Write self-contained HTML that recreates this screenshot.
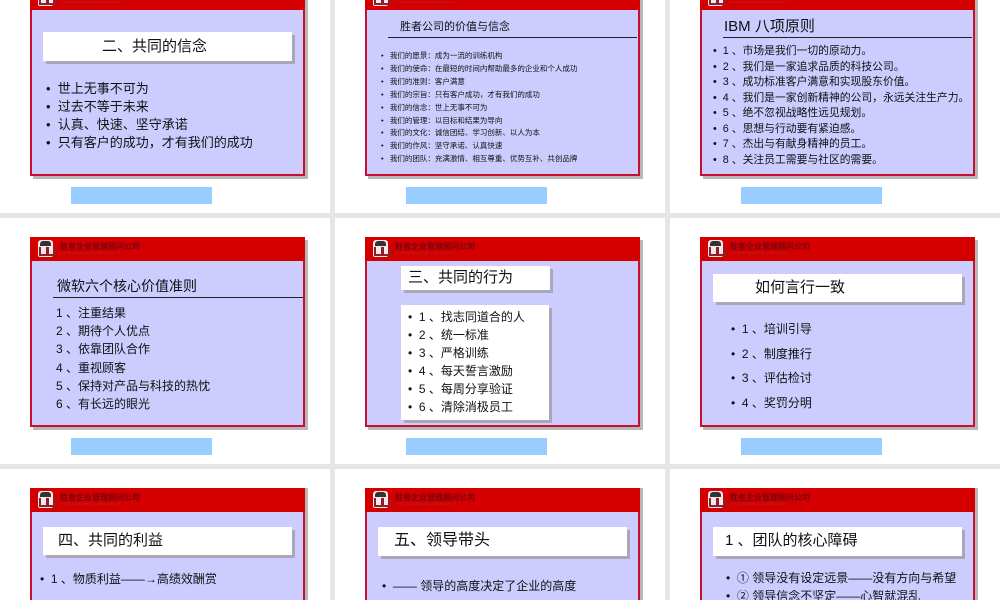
<!DOCTYPE html>
<html style="width:1000px;height:600px;overflow:hidden"><head><meta charset="utf-8"><style>
*{margin:0;padding:0;box-sizing:border-box}
body{width:1000px;height:600px;overflow:hidden;background:#e6e6e6;font-family:"Liberation Sans","Noto Sans CJK SC",sans-serif;color:#111}
#w{position:relative;width:1000px;height:600px;overflow:hidden}
.cell{position:absolute;background:#fff;width:330px}
.slide{position:absolute;width:275px;height:190px;background:#ccccff;border:2px solid #c8102e;box-shadow:3px 3px 0 #b8b8b8}
.slide.b{height:112px;border-bottom:none;box-shadow:3px 0 0 #b8b8b8}
.hdr{position:absolute;left:-2px;top:-2px;width:275px;height:24px;background:#d40000}
.logo{position:absolute;left:8px;top:3px;width:15px;height:17px;background:#f4e8e8;border-radius:3px 3px 2px 2px}
.logo:before{content:"";position:absolute;left:2px;top:1px;width:11px;height:5px;background:#333;border-radius:3px 3px 0 0}
.logo:after{content:"";position:absolute;left:1px;top:7px;width:13px;height:7px;border-left:2px solid #8a2030;border-right:2px solid #8a2030;border-bottom:2px solid #8a2030;background:linear-gradient(90deg,transparent 40%,#8a2030 40%,#8a2030 60%,transparent 60%)}
.co{position:absolute;left:30px;top:6px;font-size:8px;font-weight:bold;color:#7a0010;white-space:nowrap;line-height:1}
.co2{position:absolute;left:30px;top:15px;font-size:3px;color:#a03030;white-space:nowrap;line-height:1}
.bar{position:absolute;width:141px;height:17px;background:#99ccff}
.t{position:absolute;white-space:nowrap;line-height:1}
.box{position:absolute;background:#fff;box-shadow:3px 3px 0 #a8a8b8}
.ln{position:absolute;height:1px;background:#222}
</style></head><body><div id="w">

<div class="cell" style="left:0;top:0;height:213px"></div>
<div class="cell" style="left:335px;top:0;height:213px"></div>
<div class="cell" style="left:670px;top:0;height:213px"></div>
<div class="cell" style="left:0;top:218px;height:246px"></div>
<div class="cell" style="left:335px;top:218px;height:246px"></div>
<div class="cell" style="left:670px;top:218px;height:246px"></div>
<div class="cell" style="left:0;top:469px;height:131px"></div>
<div class="cell" style="left:335px;top:469px;height:131px"></div>
<div class="cell" style="left:670px;top:469px;height:131px"></div>

<div class="bar" style="left:71px;top:187px"></div>
<div class="bar" style="left:406px;top:187px"></div>
<div class="bar" style="left:741px;top:187px"></div>
<div class="bar" style="left:71px;top:438px"></div>
<div class="bar" style="left:406px;top:438px"></div>
<div class="bar" style="left:741px;top:438px"></div>

<div class="slide" style="left:30px;top:-14px"><div class="hdr"><div class="logo"></div><div class="co">胜者企业管理顾问公司</div><div class="co2">VICTOR CORPORATION CONSULTANT CO</div></div></div>
<div class="slide" style="left:365px;top:-14px"><div class="hdr"><div class="logo"></div><div class="co">胜者企业管理顾问公司</div><div class="co2">VICTOR CORPORATION CONSULTANT CO</div></div></div>
<div class="slide" style="left:700px;top:-14px"><div class="hdr"><div class="logo"></div><div class="co">胜者企业管理顾问公司</div><div class="co2">VICTOR CORPORATION CONSULTANT CO</div></div></div>
<div class="slide" style="left:30px;top:237px"><div class="hdr"><div class="logo"></div><div class="co">胜者企业管理顾问公司</div><div class="co2">VICTOR CORPORATION CONSULTANT CO</div></div></div>
<div class="slide" style="left:365px;top:237px"><div class="hdr"><div class="logo"></div><div class="co">胜者企业管理顾问公司</div><div class="co2">VICTOR CORPORATION CONSULTANT CO</div></div></div>
<div class="slide" style="left:700px;top:237px"><div class="hdr"><div class="logo"></div><div class="co">胜者企业管理顾问公司</div><div class="co2">VICTOR CORPORATION CONSULTANT CO</div></div></div>
<div class="slide b" style="left:30px;top:488px"><div class="hdr"><div class="logo"></div><div class="co">胜者企业管理顾问公司</div><div class="co2">VICTOR CORPORATION CONSULTANT CO</div></div></div>
<div class="slide b" style="left:365px;top:488px"><div class="hdr"><div class="logo"></div><div class="co">胜者企业管理顾问公司</div><div class="co2">VICTOR CORPORATION CONSULTANT CO</div></div></div>
<div class="slide b" style="left:700px;top:488px"><div class="hdr"><div class="logo"></div><div class="co">胜者企业管理顾问公司</div><div class="co2">VICTOR CORPORATION CONSULTANT CO</div></div></div>

<div class="box" style="left:43px;top:32px;width:249px;height:29px"></div>
<div class="t" style="left:102px;top:39px;font-size:15px">二、共同的信念</div>
<div style="position:absolute;left:46px;top:80px;font-size:13px;line-height:18px">
<div>•&nbsp; 世上无事不可为</div><div>•&nbsp; 过去不等于未来</div><div>•&nbsp; 认真、快速、坚守承诺</div><div>•&nbsp; 只有客户的成功，才有我们的成功</div></div>

<div class="t" style="left:400px;top:22px;font-size:11px">胜者公司的价值与信念</div>
<div class="ln" style="left:388px;top:37px;width:249px"></div>
<div style="position:absolute;left:381px;top:50px;font-size:7.5px;line-height:12.9px;white-space:nowrap">
<div>•&nbsp;&nbsp; 我们的愿景：成为一流的训练机构</div>
<div>•&nbsp;&nbsp; 我们的使命：在最短的时间内帮助最多的企业和个人成功</div>
<div>•&nbsp;&nbsp; 我们的准则：客户满意</div>
<div>•&nbsp;&nbsp; 我们的宗旨：只有客户成功，才有我们的成功</div>
<div>•&nbsp;&nbsp; 我们的信念：世上无事不可为</div>
<div>•&nbsp;&nbsp; 我们的管理：以目标和结果为导向</div>
<div>•&nbsp;&nbsp; 我们的文化：诚信团结、学习创新、以人为本</div>
<div>•&nbsp;&nbsp; 我们的作风：坚守承诺、认真快速</div>
<div>•&nbsp;&nbsp; 我们的团队：充满激情、相互尊重、优势互补、共创品牌</div></div>

<div class="t" style="left:724px;top:19px;font-size:15px">IBM 八项原则</div>
<div class="ln" style="left:723px;top:37px;width:249px"></div>
<div style="position:absolute;left:713px;top:44px;font-size:10.8px;line-height:15.5px;white-space:nowrap">
<div>•&nbsp; 1 、市场是我们一切的原动力。</div>
<div>•&nbsp; 2 、我们是一家追求品质的科技公司。</div>
<div>•&nbsp; 3 、成功标准客户满意和实现股东价值。</div>
<div>•&nbsp; 4 、我们是一家创新精神的公司，永远关注生产力。</div>
<div>•&nbsp; 5 、绝不忽视战略性远见规划。</div>
<div>•&nbsp; 6 、思想与行动要有紧迫感。</div>
<div>•&nbsp; 7 、杰出与有献身精神的员工。</div>
<div>•&nbsp; 8 、关注员工需要与社区的需要。</div></div>

<div class="t" style="left:57px;top:279px;font-size:14px">微软六个核心价值准则</div>
<div class="ln" style="left:53px;top:297px;width:250px"></div>
<div style="position:absolute;left:56px;top:304px;font-size:12px;line-height:18.2px;white-space:nowrap">
<div>1 、注重结果</div><div>2 、期待个人优点</div><div>3 、依靠团队合作</div><div>4 、重视顾客</div><div>5 、保持对产品与科技的热忱</div><div>6 、有长远的眼光</div></div>

<div class="box" style="left:401px;top:266px;width:149px;height:24px"></div>
<div class="t" style="left:408px;top:270px;font-size:15px">三、共同的行为</div>
<div class="box" style="left:401px;top:305px;width:148px;height:115px"></div>
<div style="position:absolute;left:408px;top:308px;font-size:12px;line-height:18px;white-space:nowrap">
<div>•&nbsp; 1 、找志同道合的人</div><div>•&nbsp; 2 、统一标准</div><div>•&nbsp; 3 、严格训练</div><div>•&nbsp; 4 、每天誓言激励</div><div>•&nbsp; 5 、每周分享验证</div><div>•&nbsp; 6 、清除消极员工</div></div>

<div class="box" style="left:713px;top:274px;width:249px;height:28px"></div>
<div class="t" style="left:755px;top:280px;font-size:15px">如何言行一致</div>
<div style="position:absolute;left:731px;top:317px;font-size:12px;line-height:24.7px;white-space:nowrap">
<div>•&nbsp; 1 、培训引导</div><div>•&nbsp; 2 、制度推行</div><div>•&nbsp; 3 、评估检讨</div><div>•&nbsp; 4 、奖罚分明</div></div>

<div class="box" style="left:43px;top:527px;width:249px;height:28px"></div>
<div class="t" style="left:58px;top:533px;font-size:15px">四、共同的利益</div>
<div class="t" style="left:40px;top:573px;font-size:12px">•&nbsp; 1 、物质利益——→高绩效酬赏</div>

<div class="box" style="left:378px;top:527px;width:249px;height:29px"></div>
<div class="t" style="left:394px;top:533px;font-size:16px">五、领导带头</div>
<div class="t" style="left:382px;top:580px;font-size:12px">•&nbsp; —— 领导的高度决定了企业的高度</div>

<div class="box" style="left:713px;top:527px;width:249px;height:29px"></div>
<div class="t" style="left:725px;top:533px;font-size:15px">1 、团队的核心障碍</div>
<div class="t" style="left:726px;top:572px;font-size:12px">•&nbsp; ① 领导没有设定远景——没有方向与希望</div>
<div style="position:absolute;left:726px;top:590px;width:240px;height:10px;overflow:hidden;font-size:12px;line-height:1;white-space:nowrap">•&nbsp; ② 领导信念不坚定——心智就混乱</div>

</div></body></html>
